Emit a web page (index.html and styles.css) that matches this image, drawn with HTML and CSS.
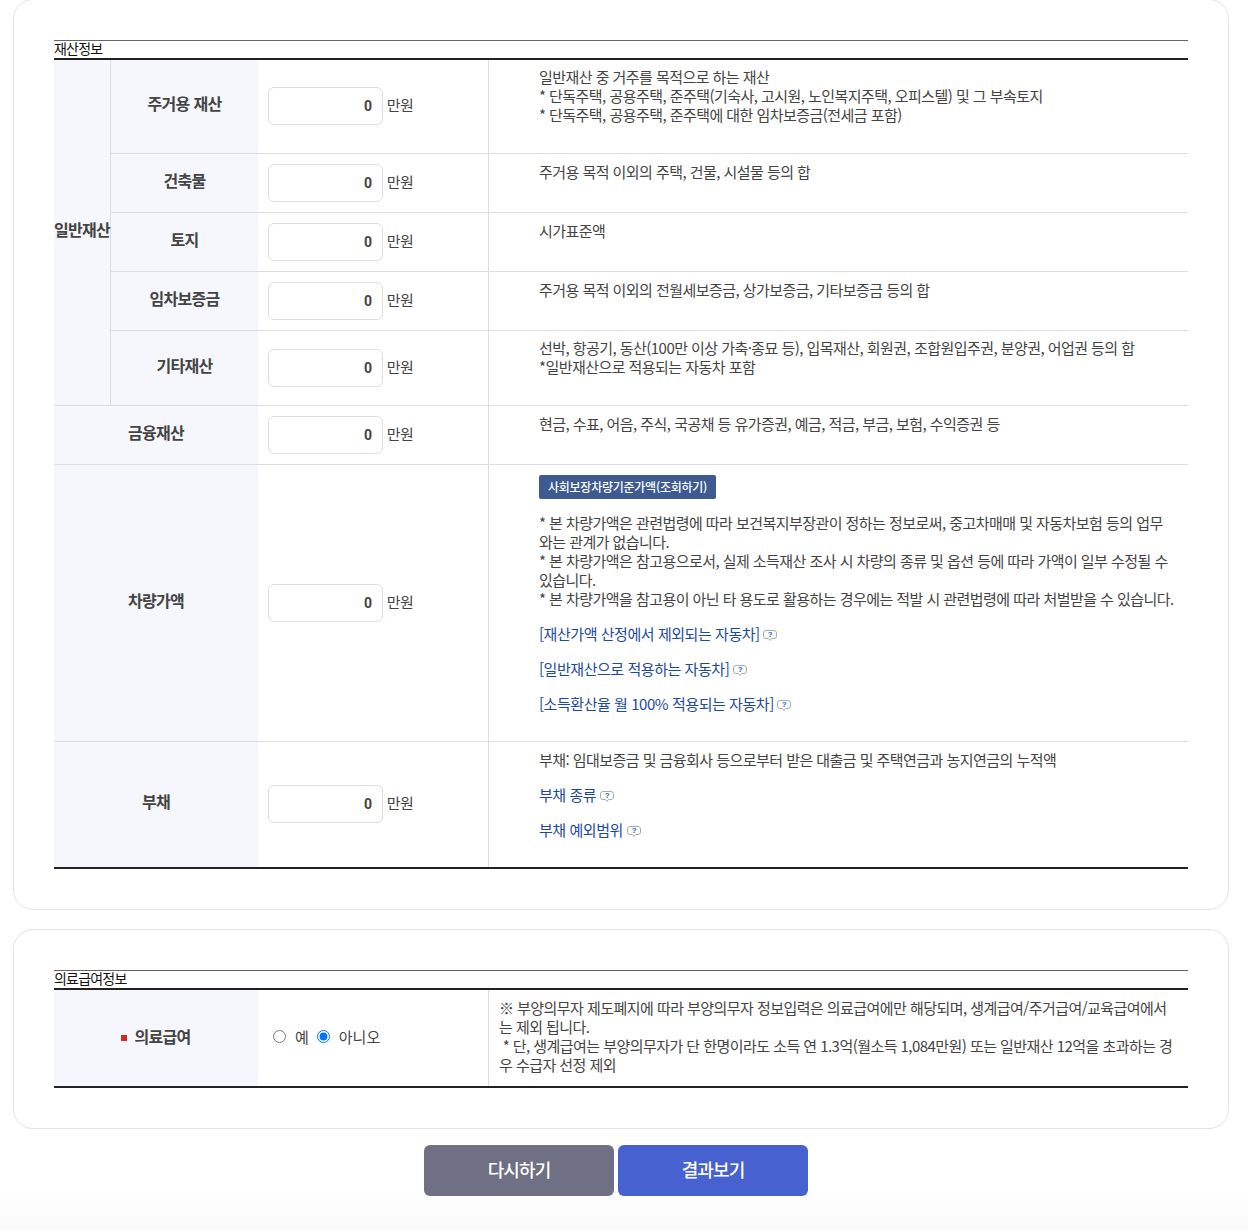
FILE: index.html
```html
<!DOCTYPE html>
<html lang="ko">
<head>
<meta charset="UTF-8">
<meta name="viewport" content="width=device-width, initial-scale=1.0">
<title>재산정보 입력</title>
<link rel="stylesheet" href="styles.css">
</head>
<body>

<div class="page">

    <section class="card card-first">
        <h3 class="tbl-title">재산정보</h3>
        <table class="tbl">
            <colgroup>
                <col class="col-a"><col class="col-b"><col class="col-c"><col>
            </colgroup>
            <tr>
                <th rowspan="5" class="group">일반재산</th>
                <th>주거용 재산</th>
                <td class="amount amount-up"><input class="num" type="text" value="0"> <span class="unit">만원</span></td>
                <td class="desc desc-two">일반재산 중 거주를 목적으로 하는 재산<br>* 단독주택, 공용주택, 준주택(기숙사, 고시원, 노인복지주택, 오피스텔) 및 그 부속토지<br>* 단독주택, 공용주택, 준주택에 대한 임차보증금(전세금 포함)</td>
            </tr>
            <tr>
                <th>건축물</th>
                <td class="amount"><input class="num" type="text" value="0"> <span class="unit">만원</span></td>
                <td class="desc">주거용 목적 이외의 주택, 건물, 시설물 등의 합</td>
            </tr>
            <tr>
                <th>토지</th>
                <td class="amount"><input class="num" type="text" value="0"> <span class="unit">만원</span></td>
                <td class="desc">시가표준액</td>
            </tr>
            <tr>
                <th>임차보증금</th>
                <td class="amount"><input class="num" type="text" value="0"> <span class="unit">만원</span></td>
                <td class="desc">주거용 목적 이외의 전월세보증금, 상가보증금, 기타보증금 등의 합</td>
            </tr>
            <tr>
                <th>기타재산</th>
                <td class="amount"><input class="num" type="text" value="0"> <span class="unit">만원</span></td>
                <td class="desc desc-two">선박, 항공기, 동산(100만 이상 가축·종묘 등), 입목재산, 회원권, 조합원입주권, 분양권, 어업권 등의 합<br>*일반재산으로 적용되는 자동차 포함</td>
            </tr>
            <tr>
                <th colspan="2">금융재산</th>
                <td class="amount"><input class="num" type="text" value="0"> <span class="unit">만원</span></td>
                <td class="desc">현금, 수표, 어음, 주식, 국공채 등 유가증권, 예금, 적금, 부금, 보험, 수익증권 등</td>
            </tr>
            <tr>
                <th colspan="2">차량가액</th>
                <td class="amount"><input class="num" type="text" value="0"> <span class="unit">만원</span></td>
                <td class="desc">
                    <a class="btn-lookup" href="#">사회보장차량기준가액(조회하기)</a>
                    <p class="note">* 본 차량가액은 관련법령에 따라 보건복지부장관이 정하는 정보로써, 중고차매매 및 자동차보험 등의 업무<br>와는 관계가 없습니다.<br>* 본 차량가액은 참고용으로서, 실제 소득재산 조사 시 차량의 종류 및 옵션 등에 따라 가액이 일부 수정될 수<br>있습니다.<br>* 본 차량가액을 참고용이 아닌 타 용도로 활용하는 경우에는 적발 시 관련법령에 따라 처벌받을 수 있습니다.</p>
                    <p class="more"><a href="#">[재산가액 산정에서 제외되는 자동차]</a> <svg class="ico" viewBox="0 0 14 12"><path d="M3 .5h8A2.500 2.500 0 0 1 13.500 3v3A2.500 2.500 0 0 1 11 8.500H8.500L7 10.500 5.500 8.500H3A2.500 2.500 0 0 1 .5 6V3A2.500 2.500 0 0 1 3 .5z"/><text x="7" y="7.200">?</text></svg></p>
                    <p class="more"><a href="#">[일반재산으로 적용하는 자동차]</a> <svg class="ico" viewBox="0 0 14 12"><path d="M3 .5h8A2.500 2.500 0 0 1 13.500 3v3A2.500 2.500 0 0 1 11 8.500H8.500L7 10.500 5.500 8.500H3A2.500 2.500 0 0 1 .5 6V3A2.500 2.500 0 0 1 3 .5z"/><text x="7" y="7.200">?</text></svg></p>
                    <p class="more"><a href="#">[소득환산율 월 100% 적용되는 자동차]</a> <svg class="ico" viewBox="0 0 14 12"><path d="M3 .5h8A2.500 2.500 0 0 1 13.500 3v3A2.500 2.500 0 0 1 11 8.500H8.500L7 10.500 5.500 8.500H3A2.500 2.500 0 0 1 .5 6V3A2.500 2.500 0 0 1 3 .5z"/><text x="7" y="7.200">?</text></svg></p>
                </td>
            </tr>
            <tr>
                <th colspan="2">부채</th>
                <td class="amount amount-up"><input class="num" type="text" value="0"> <span class="unit">만원</span></td>
                <td class="desc">
                    부채: 임대보증금 및 금융회사 등으로부터 받은 대출금 및 주택연금과 농지연금의 누적액
                    <p class="more"><a href="#">부채 종류</a> <svg class="ico" viewBox="0 0 14 12"><path d="M3 .5h8A2.500 2.500 0 0 1 13.500 3v3A2.500 2.500 0 0 1 11 8.500H8.500L7 10.500 5.500 8.500H3A2.500 2.500 0 0 1 .5 6V3A2.500 2.500 0 0 1 3 .5z"/><text x="7" y="7.200">?</text></svg></p>
                    <p class="more"><a href="#">부채 예외범위</a> <svg class="ico" viewBox="0 0 14 12"><path d="M3 .5h8A2.500 2.500 0 0 1 13.500 3v3A2.500 2.500 0 0 1 11 8.500H8.500L7 10.500 5.500 8.500H3A2.500 2.500 0 0 1 .5 6V3A2.500 2.500 0 0 1 3 .5z"/><text x="7" y="7.200">?</text></svg></p>
                </td>
            </tr>
        </table>
    </section>

    <section class="card card-second">
        <h3 class="tbl-title">의료급여정보</h3>
        <table class="tbl">
            <colgroup>
                <col class="col-a"><col class="col-b"><col class="col-c"><col>
            </colgroup>
            <tr>
                <th colspan="2" class="th-med"><span class="req"></span>의료급여</th>
                <td class="amount">
                    <div class="radios">
                        <label class="radio"><input type="radio" name="medical">예</label>
                        <label class="radio"><input type="radio" name="medical" checked>아니오</label>
                    </div>
                </td>
                <td class="desc desc-short">※ 부양의무자 제도폐지에 따라 부양의무자 정보입력은 의료급여에만 해당되며, 생계급여/주거급여/교육급여에서<br>는 제외 됩니다.<br>&nbsp;* 단, 생계급여는 부양의무자가 단 한명이라도 소득 연 1.3억(월소득 1,084만원) 또는 일반재산 12억을 초과하는 경<br>우 수급자 선정 제외</td>
            </tr>
        </table>
    </section>

    <div class="actions">
        <button class="btn btn-reset" type="button">다시하기</button>
        <button class="btn btn-submit" type="button">결과보기</button>
    </div>

</div>

</body>
</html>
```

FILE: styles.css
```css
html, body {
    margin: 0;
    height: 1230px;
    overflow: hidden;
}

body {
    background: linear-gradient(#fff 1190px, #fafafa 1230px);
    color: #444;
    font-family: "Noto Sans CJK KR", "Noto Sans", sans-serif;
    font-size: 15px;
    line-height: 19px;
    letter-spacing: -0.55px;
}

.page {
    padding: 0 19px 0 13px;
}

.card {
    box-sizing: border-box;
    background: #fff;
    border: 1px solid #e3e3e3;
    border-radius: 20px;
    padding: 40px;
}

.card-first {
    margin-top: -1px;
    height: 911px;
}

.card-second {
    margin-top: 19px;
    height: 200px;
}

.tbl-title {
    margin: 0;
    padding-bottom: 3px;
    border-top: 1px solid #666;
    color: #111;
    font-size: 14px;
    font-weight: 400;
    line-height: 14px;
    letter-spacing: -0.8px;
}

/* 표 */
.tbl {
    width: 100%;
    table-layout: fixed;
    border-collapse: separate;
    border-spacing: 0;
    border-top: 2px solid #222;
    border-bottom: 2px solid #222;
}

.col-a { width: 57px; }
.col-b { width: 147px; }
.col-c { width: 230px; }

.tbl th {
    padding: 0 0 6px;
    background: #f5f7fc;
    font-size: 16px;
    font-weight: 700;
    letter-spacing: -0.7px;
    text-align: center;
    white-space: nowrap;
    border-bottom: 1px solid #ddd;
}

.tbl .group {
    border-right: 1px solid #ddd;
}

.tbl .th-med {
    padding-bottom: 3px;
}

.tbl td {
    border-bottom: 1px solid #ddd;
}

.tbl tr:last-child th,
.tbl tr:last-child td {
    border-bottom: 0;
}

.amount {
    padding: 10px;
    white-space: nowrap;
}

.amount-up {
    padding-bottom: 12px;
}

.num {
    box-sizing: border-box;
    width: 115px;
    height: 38px;
    padding: 0 10px;
    border: 1px solid #ddd;
    border-radius: 6px;
    background: #fff;
    color: #444;
    font-family: Roboto, sans-serif;
    font-size: 14px;
    font-weight: 700;
    text-align: right;
    vertical-align: middle;
}

.unit {
    vertical-align: -1px;
}

.desc {
    padding: 8px 10px 28px 50px;
    border-left: 1px solid #ddd;
    vertical-align: top;
}

.desc-two {
    padding-top: 7px;
    padding-bottom: 29px;
}

.desc-short {
    padding: 8px 10px 12px 10px;
}

.btn-lookup {
    display: inline-block;
    margin-top: 2px;
    padding: 0 9px;
    height: 24px;
    border-radius: 2px;
    background: #3d5a91;
    color: #fff;
    font-size: 12px;
    font-weight: 500;
    line-height: 23px;
    letter-spacing: -0.25px;
    text-decoration: none;
    vertical-align: top;
}

.note {
    margin: 14px 0 0;
}

.more {
    margin: 16px 0 0;
}

.more a {
    color: #1d4a9c;
    letter-spacing: -0.45px;
    text-decoration: none;
}

.ico {
    width: 14px;
    height: 12px;
    vertical-align: -2px;
}

.ico path {
    fill: #fff;
    stroke: #aaa;
}

.ico text {
    fill: #2a5bb5;
    font-family: "Liberation Sans", sans-serif;
    font-size: 8px;
    font-weight: 700;
    text-anchor: middle;
}

/* 라디오 */
.radios {
    display: flex;
    align-items: center;
    gap: 3px;
    padding-bottom: 4px;
    letter-spacing: 0;
}

.radio {
    display: flex;
    align-items: center;
}

.radio input {
    margin: 0 9px 0 5px;
}

.req {
    display: inline-block;
    width: 6px;
    height: 6px;
    margin-right: 7px;
    background: #d22b1f;
    vertical-align: 2px;
}

/* 버튼 */
.actions {
    display: flex;
    justify-content: center;
    gap: 4px;
    margin-top: 16px;
    padding-right: 10px;
}

.btn {
    width: 190px;
    height: 51px;
    padding: 0 0 4px;
    border: 0;
    border-radius: 6px;
    color: #fff;
    font-family: inherit;
    font-size: 18px;
    font-weight: 500;
    letter-spacing: -0.9px;
}

.btn-reset { background: #6f7083; }
.btn-submit { background: #4761d0; }
```
